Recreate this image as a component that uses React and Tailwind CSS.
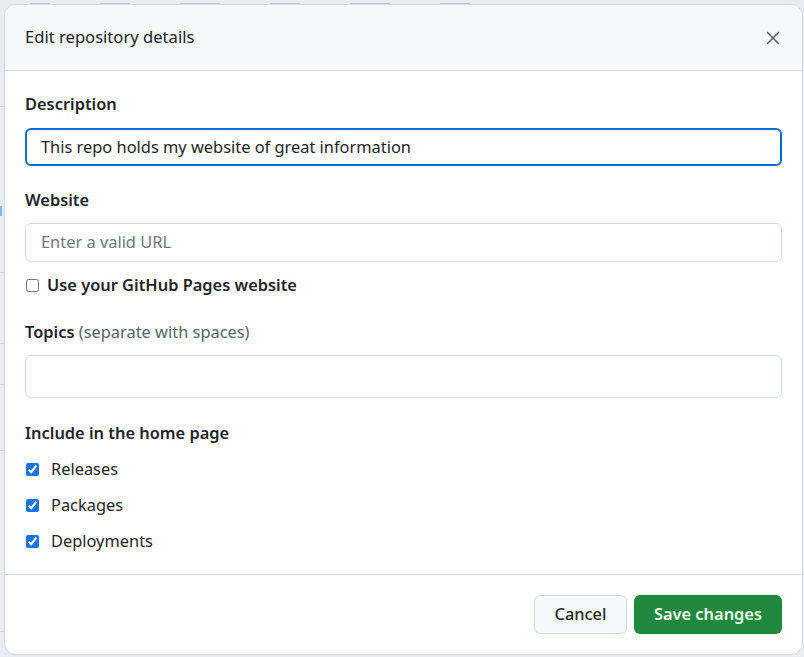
import React from "react";

const font = { fontFamily: '"Noto Sans", "Open Sans", "Liberation Sans", sans-serif' };

function Check({ label }) {
  return (
    <label className="flex h-6 items-center">
      <input type="checkbox" defaultChecked className="m-0 ml-[1px] h-[13px] w-[13px] accent-[#1a73e8]" />
      <span className="ml-[12px] text-[16.4px] text-[#1f2328]">{label}</span>
    </label>
  );
}

export default function App() {
  return (
    <div className="relative h-[657px] w-[804px] overflow-hidden bg-[#e8ebef]" style={font}>
      <div className="absolute left-0 top-0 flex h-[4px] w-[560px] items-end gap-[50px] pl-[30px] opacity-40">
        <div className="h-px w-[20px] bg-[#8c959f]" />
        <div className="h-px w-[30px] bg-[#8c959f]" />
        <div className="h-px w-[40px] bg-[#8c959f]" />
        <div className="h-px w-[30px] bg-[#8c959f]" />
        <div className="h-px w-[40px] bg-[#8c959f]" />
        <div className="h-px w-[30px] bg-[#8c959f]" />
      </div>
      <div className="absolute left-0 top-0 flex h-full w-[4px] flex-col">
        <div className="mt-[106px] h-px w-full bg-[#d0d7de]" />
        <div className="mt-[99px] h-[10px] w-[2px] bg-[#80b3ff]" />
        <div className="mt-[56px] h-px w-full bg-[#d0d7de]" />
        <div className="mt-[70px] h-px w-full bg-[#d0d7de]" />
        <div className="mt-[40px] h-px w-full bg-[#d0d7de]" />
        <div className="mt-[65px] h-px w-full bg-[#d0d7de]" />
        <div className="mt-[180px] h-px w-full bg-[#d0d7de]" />
      </div>
      <div className="relative ml-[4px] mt-[4px] flex h-[651px] w-[799px] flex-col overflow-hidden rounded-[12px] border border-[#d1d9e0] bg-white">
        <div className="flex h-[66px] shrink-0 items-center justify-between border-b border-[#d1d9e0] bg-[#f6f8fa] pl-[20px] pr-[22px]">
          <h2 className="text-[16.6px] font-normal text-[#1f2328]">Edit repository details</h2>
          <svg width="14" height="14" viewBox="0 0 14 14" fill="none" stroke="#59636e" strokeWidth="1.6" strokeLinecap="round">
            <path d="M1.5 1.5 12.5 12.5M12.5 1.5 1.5 12.5" />
          </svg>
        </div>
        <div className="flex flex-col px-[20px] pb-[21px] pt-[21px]">
          <div className="h-6 text-[16.4px] font-semibold leading-6 text-[#1f2328]">Description</div>
          <div className="mt-[12px] flex h-[38px] items-center rounded-[6px] border-2 border-[#0969da] px-[14px] text-[16.4px] text-[#1f2328]">
            This repo holds my website of great information
          </div>
          <div className="mt-[22px] h-6 text-[16.4px] font-semibold leading-6 text-[#1f2328]">Website</div>
          <div className="mt-[11px] flex h-[39px] items-center rounded-[6px] border border-[#d1d9e0] px-[15px] text-[16.4px] text-[#6e7781]">
            Enter a valid URL
          </div>
          <label className="mt-[11px] flex h-6 items-center">
            <input type="checkbox" className="m-0 ml-[1px] h-[13px] w-[13px]" />
            <span className="ml-[8px] text-[16.4px] font-semibold text-[#1f2328]">Use your GitHub Pages website</span>
          </label>
          <div className="mt-[23px] h-6 text-[16.4px] leading-6 text-[#1f2328]">
            <span className="font-semibold">Topics</span> <span className="text-[#59636e]">(separate with spaces)</span>
          </div>
          <div className="mt-[11px] h-[43px] rounded-[6px] border border-[#d1d9e0]" />
          <div className="mt-[23px] h-6 text-[16.4px] font-semibold leading-6 text-[#1f2328]">Include in the home page</div>
          <div className="mt-[12px] flex flex-col gap-[12px]">
            <Check label="Releases" />
            <Check label="Packages" />
            <Check label="Deployments" />
          </div>
        </div>
        <div className="flex flex-1 items-center justify-end gap-[7px] border-t border-[#d1d9e0] px-[20px]">
          <button className="flex h-[39px] w-[93px] items-center justify-center rounded-[6px] border border-[#d1d9e0] bg-[#f6f8fa] text-[16.4px] font-medium text-[#25292e]">
            Cancel
          </button>
          <button className="flex h-[39px] w-[148px] items-center justify-center rounded-[6px] bg-[#1f883d] text-[16.4px] font-semibold text-white">
            Save changes
          </button>
        </div>
      </div>
    </div>
  );
}
